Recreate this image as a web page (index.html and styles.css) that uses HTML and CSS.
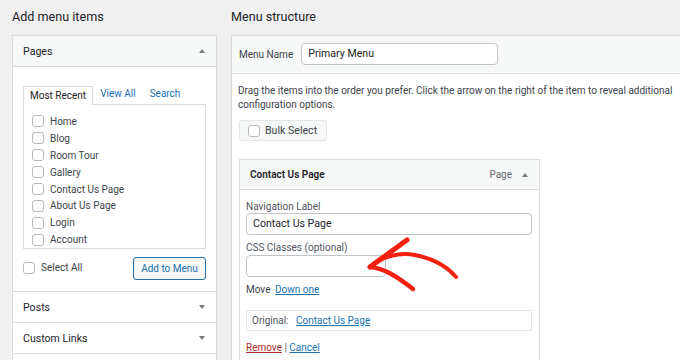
FILE: index.html
```html
<!DOCTYPE html>
<html>
<head>
<meta charset="UTF-8">
<title>Menus</title>
<meta name="viewport" content="width=device-width, initial-scale=1.0">
<link rel="stylesheet" href="styles.css">
</head>
<body>

<div class="wrap">

  <!-- LEFT: ADD ITEMS -->
  <div class="col-left">
    <h2>Add menu items</h2>

    <div class="acc">
      <div class="sec open">
        <div class="sec-head"><span>Pages</span><span class="tri up"></span></div>
        <div class="sec-body">
          <div class="tabs">
            <span class="tab active">Most Recent</span>
            <span class="tab">View All</span>
            <span class="tab">Search</span>
          </div>
          <div class="tab-panel">
            <label class="item"><span class="cb"></span>Home</label>
            <label class="item"><span class="cb"></span>Blog</label>
            <label class="item"><span class="cb"></span>Room Tour</label>
            <label class="item"><span class="cb"></span>Gallery</label>
            <label class="item"><span class="cb"></span>Contact Us Page</label>
            <label class="item"><span class="cb"></span>About Us Page</label>
            <label class="item"><span class="cb"></span>Login</label>
            <label class="item"><span class="cb"></span>Account</label>
          </div>
          <div class="sec-foot">
            <label class="item"><span class="cb"></span>Select All</label>
            <button class="btn-add">Add to Menu</button>
          </div>
        </div>
      </div>
      <div class="sec"><div class="sec-head"><span>Posts</span><span class="tri"></span></div></div>
      <div class="sec"><div class="sec-head"><span>Custom Links</span><span class="tri"></span></div></div>
      <div class="sec"><div class="sec-head"><span>&nbsp;</span></div></div>
    </div>
  </div>

  <!-- RIGHT: STRUCTURE -->
  <div class="col-right">
    <h2>Menu structure</h2>

    <div class="mbox">
      <div class="mhead">
        <span class="mlabel">Menu Name</span>
        <div class="inp name">Primary Menu</div>
      </div>
      <div class="mbody">
        <p class="hint">Drag the items into the order you prefer. Click the arrow on the right of the item to reveal additional configuration options.</p>

        <div class="bulk"><span class="cb"></span>Bulk Select</div>

        <div class="card">
          <div class="card-head">
            <b>Contact Us Page</b>
            <span class="ctype">Page <span class="tri up"></span></span>
          </div>
          <div class="card-body">
            <div class="flabel">Navigation Label</div>
            <div class="inp wide">Contact Us Page</div>
            <div class="flabel second">CSS Classes (optional)</div>
            <div class="inp short"></div>
            <div class="move">Move <a>Down one</a></div>
            <div class="orig">Original: <a>Contact Us Page</a></div>
            <div class="actions"><a class="del">Remove</a> | <a>Cancel</a></div>
          </div>
        </div>
      </div>
    </div>
  </div>

</div>

<!-- hand drawn arrow over the form -->
<svg class="arrow" width="110" height="70" viewBox="0 0 110 70">
  <path d="M10 37 C 22 26, 40 22, 55 25 C 70 28, 85 34, 96 47" fill="none" stroke="#f5200f" stroke-width="4" stroke-linecap="round"/>
  <path d="M10 37 C 22 28, 36 18, 47 10" fill="none" stroke="#f5200f" stroke-width="5" stroke-linecap="round"/>
  <path d="M10 37 C 22 38, 34 44, 53 59" fill="none" stroke="#f5200f" stroke-width="4.5" stroke-linecap="round"/>
</svg>

</body>
</html>
```

FILE: styles.css
```css
body{
  margin:0; height:360px; overflow:hidden;
  background:#f0f0f1;
  font-family:Roboto,"Noto Sans",Arial,sans-serif;
  font-size:10px; color:#1d2327;
  position:relative;
}
.wrap{display:flex; gap:14px; padding:0 0 0 12px}
h2{
  margin:0; height:35px; line-height:33px;
  font-size:12.6px; font-weight:400; color:#1d2327;
}
.col-left{width:205px; flex:none}
.col-right{width:470px; flex:none}

/* accordion */
.acc{background:#fff; border:1px solid #dcdcde; border-bottom:none}
.sec{border-bottom:1px solid #dcdcde}
.sec-head{
  display:flex; justify-content:space-between; align-items:center;
  height:30px; padding:0 11px 0 10px;
  font-size:10.6px;
}
.open .sec-head{background:#f6f7f7; border-bottom:1px solid #dcdcde}
.tri{width:0;height:0;border-left:3px solid transparent;border-right:3px solid transparent;border-top:4px solid #787c82}
.tri.up{border-top:none;border-bottom:4px solid #787c82}
.sec-body{padding:18px 10px 12px}

.tabs{display:flex; height:19px; align-items:stretch}
.tab{padding:0 7px; line-height:17px; color:#2271b1}
.tab.active{
  color:#1d2327; background:#fff;
  border:1px solid #dcdcde; border-bottom:none;
  padding:0 6px; position:relative; top:1px;
}
.tab-panel{border:1px solid #dcdcde; padding:8px 8px 0; height:135px}
.item{display:flex; align-items:center; height:16.9px; color:#3c434a}
.cb{
  width:10px; height:10px; flex:none; margin-right:6px;
  border:1px solid #b5b8bc; border-radius:3px; background:#fff;
}
.sec-foot{display:flex; justify-content:space-between; align-items:center; margin-top:8px; height:22px}
.btn-add{
  height:23px; width:73px; padding:0;
  font:inherit; font-size:10px; color:#2271b1;
  background:#f6f7f7; border:1px solid #2271b1; border-radius:3px;
}

/* menu box */
.mbox{background:#fff; border:1px solid #dcdcde; height:340px}
.mhead{
  display:flex; align-items:center; gap:8px;
  height:37px; padding:0 7px;
  background:#f6f7f7; border-bottom:1px solid #dcdcde;
}
.mlabel{color:#3c434a}
.inp{
  height:20px; line-height:20px; padding:0 6px;
  background:#fff; border:1px solid #c3c4c7; border-radius:4px;
  font-size:10.6px; color:#1d2327;
}
.inp.name{width:183px; margin-top:-1px}
.mbody{padding:10px 6px}
.hint{margin:0; line-height:14px; color:#3c434a}
.bulk{
  display:inline-flex; align-items:center;
  margin:8px 0 0 1px; height:19px; padding:0 9px 0 8px;
  background:#f6f7f7; border:1px solid #e5e6e8; border-radius:3px;
  font-size:10.6px; color:#3c434a;
}
.bulk .cb{margin-right:5px}

.card{width:299px; margin:18px 0 0 1px; border:1px solid #dcdcde; border-bottom:none}
.card-head{
  display:flex; justify-content:space-between; align-items:center;
  height:29px; padding:0 11px 0 10px;
  background:#f6f7f7; border-bottom:1px solid #dcdcde;
}
.card-head b{font-weight:600}
.ctype{color:#646970; display:flex; align-items:center; gap:10px}
.card-body{padding:10px 7px 20px 6px}
.flabel{color:#50575e; height:14px; line-height:14px}
.flabel.second{margin-top:6px}
.inp.wide{width:272px; margin-top:-1px}
.inp.short{width:126px}
.move{margin-top:7px; line-height:12px; color:#3c434a}
.move a,.orig a,.actions a{color:#2271b1; text-decoration:underline; margin-left:2px}
.orig{
  margin-top:14px; height:19px; line-height:19px; padding:0 5px;
  border:1px solid #e5e6e8; color:#50575e;
}
.orig a{margin-left:5px}
.actions{margin-top:11px; line-height:12px; color:#50575e}
.actions a{margin-left:0}
.actions .del{color:#b32d2e}

.arrow{position:absolute; left:360px; top:230px}
```
